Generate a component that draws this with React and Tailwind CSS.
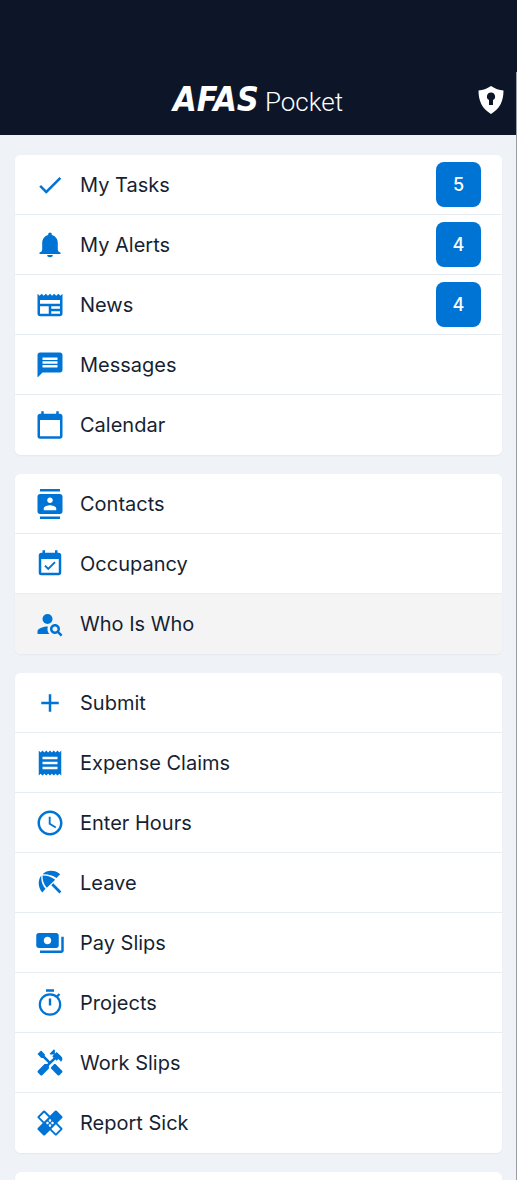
import {
  MdCheck, MdNewspaper, MdMessage, MdCalendarToday, MdContacts,
  MdEventAvailable, MdPersonSearch, MdAdd, MdReceipt, MdAccessTime,
  MdPayments, MdHandyman, MdOutlineHealing,
} from 'react-icons/md';

function Bell(props) {
  return (
    <svg viewBox="0 0 30 30" fill="currentColor" aria-hidden="true" {...props}>
      <path d="M15 2.500c1 0 1.800.8 1.800 1.800v.6c3.800.9 6 4.200 6 8.100v6.500c0 1.500 1 2.500 2.700 3V24H4.500v-1.500c1.700-.5 2.700-1.500 2.700-3V13c0-3.900 2.200-7.200 6-8.100v-.6c0-1 .8-1.800 1.800-1.800ZM12.200 25h5.600a2.800 2.200 0 0 1-5.600 0Z" />
    </svg>
  );
}

function Timer(props) {
  return (
    <svg viewBox="0 0 30 30" fill="none" stroke="currentColor" aria-hidden="true" {...props}>
      <circle cx="15" cy="16.500" r="10.200" strokeWidth="2.200" />
      <path d="M11 2.500h8M15 10.500v7M22 8.500l2.500-2.500" strokeWidth="2.400" />
    </svg>
  );
}

function Umbrella(props) {
  return (
    <svg viewBox="0 0 30 30" fill="currentColor" aria-hidden="true" {...props}>
      <path d="M6.300 7.500C2.700 12 2.800 19.500 7.300 24.500L10.500 20.800C7 17 6 12 6.300 7.500ZM7.500 6.300C12 1.700 20 1.700 25.200 6.200L21.500 10C17.500 7 12.500 6 7.500 6.300ZM7.600 7.600C12 7.500 16.500 9 20.200 11.800L11.800 19.800C8.800 16.500 7.300 12 7.600 7.600Z" />
      <path d="M17.300 16.300 25.400 24.400" fill="none" stroke="currentColor" strokeWidth="2.800" />
    </svg>
  );
}

const groups = [
  [
    { label: 'My Tasks', icon: MdCheck, count: 5 },
    { label: 'My Alerts', icon: Bell, count: 4 },
    { label: 'News', icon: MdNewspaper, count: 4 },
    { label: 'Messages', icon: MdMessage },
    { label: 'Calendar', icon: MdCalendarToday },
  ],
  [
    { label: 'Contacts', icon: MdContacts },
    { label: 'Occupancy', icon: MdEventAvailable },
    { label: 'Who Is Who', icon: MdPersonSearch, active: true },
  ],
  [
    { label: 'Submit', icon: MdAdd },
    { label: 'Expense Claims', icon: MdReceipt },
    { label: 'Enter Hours', icon: MdAccessTime },
    { label: 'Leave', icon: Umbrella },
    { label: 'Pay Slips', icon: MdPayments },
    { label: 'Projects', icon: Timer },
    { label: 'Work Slips', icon: MdHandyman },
    { label: 'Report Sick', icon: MdOutlineHealing },
  ],
];

function ShieldLock() {
  return (
    <svg viewBox="0 0 26 28" className="h-7 w-[26px]" fill="currentColor" aria-hidden="true">
      <path fillRule="evenodd" d="M13 0Q19 4 25.500 4.500C25.500 15 22 22.500 13 28 4 22.500.5 15 .5 4.500Q7 4 13 0ZM13 6.500a4 4 0 0 0-2 7.500V19h4v-5a4 4 0 0 0-2-7.500Z" />
    </svg>
  );
}

function MenuRow({ item }) {
  const Icon = item.icon;
  return (
    <li className="flex h-[60px] border-b border-[#e8ecf3] last:border-b-0">
      <a href="#" className={`flex flex-1 items-center gap-[15px] pr-[21px] pl-5 ${item.active ? 'bg-[#f4f4f4]' : 'bg-white'}`}>
        <Icon className="size-[30px] shrink-0 text-[#0074d4]" />
        <span className="flex-1 text-xl text-[#171f33]">{item.label}</span>
        {item.count && (
          <span className="flex size-[45px] items-center justify-center rounded-lg bg-[#0074d4] text-lg font-medium text-white">
            {item.count}
          </span>
        )}
      </a>
    </li>
  );
}

export default function App() {
  return (
    <div className="h-screen overflow-hidden bg-[#eff3f8] font-['Inter',sans-serif]">
      <div className="h-[72px] bg-[#0d1628]" />
      <div className="border-r border-[#9a9ea6]">
        <header className="grid h-[63px] grid-cols-[1fr_auto_1fr] items-center bg-[#0d1628] px-3 pb-[7px] text-white">
          <h1 className="col-start-2 flex items-baseline gap-1.5">
            <span className="font-['DejaVu_Sans_Condensed','DejaVu_Sans',sans-serif] text-[34px] leading-10 font-bold italic">AFAS</span>
            <span className="font-['Roboto',sans-serif] text-[26px] font-light">Pocket</span>
          </h1>
          <button type="button" aria-label="Security" className="justify-self-end">
            <ShieldLock />
          </button>
        </header>

        <main className="flex flex-col gap-[19px] pt-5 pr-[14px] pl-[15px]">
          {groups.map((items) => (
            <ul key={items[0].label} className="overflow-hidden rounded-md bg-white shadow-xs">
              {items.map((item) => <MenuRow key={item.label} item={item} />)}
            </ul>
          ))}
          <div className="h-[60px] rounded-md bg-white shadow-xs" />
        </main>
      </div>
    </div>
  );
}
